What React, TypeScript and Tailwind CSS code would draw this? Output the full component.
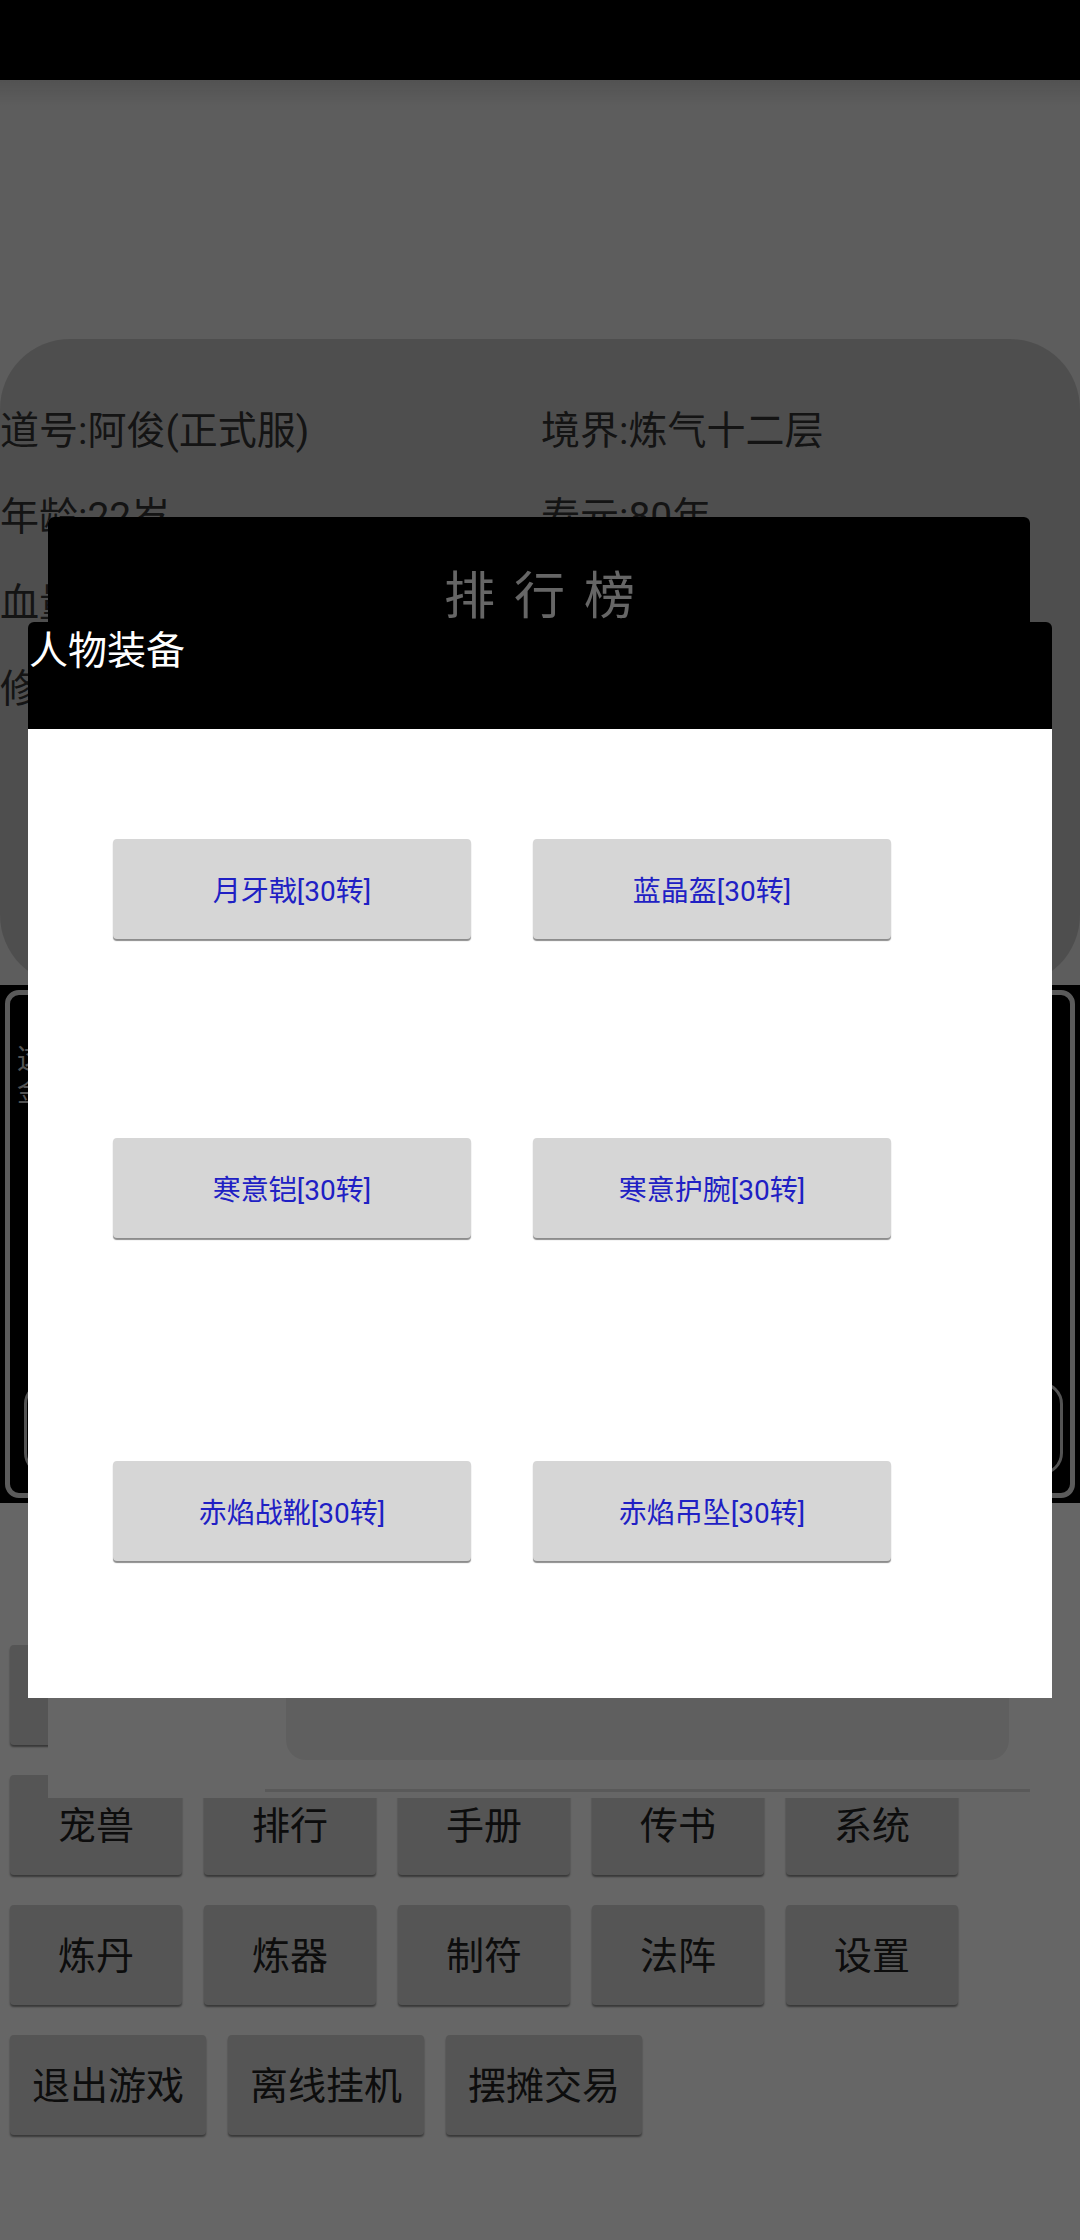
import React from "react";

const infoRows = [
  ["道号:阿俊(正式服)", "境界:炼气十二层"],
  ["年龄:22岁", "寿元:80年"],
  ["血量:1200/1200", ""],
  ["修为:35210/50000", ""],
];

const menuRows = [
  ["背包", "功法", "任务", "地图", "好友"],
  ["宠兽", "排行", "手册", "传书", "系统"],
  ["炼丹", "炼器", "制符", "法阵", "设置"],
];

const equipRows = [
  { items: ["月牙戟[30转]", "蓝晶盔[30转]"], mt: "mt-[110px]" },
  { items: ["寒意铠[30转]", "寒意护腕[30转]"], mt: "mt-[199px]" },
  { items: ["赤焰战靴[30转]", "赤焰吊坠[30转]"], mt: "mt-[223px]" },
];

function MenuButton({ label, wide }: { label: string; wide?: boolean }) {
  return (
    <button
      className={`${wide ? "w-[196px]" : "w-[172px]"} flex h-[100px] items-center justify-center rounded-[4px] bg-[#d4d4d4] pt-[3px] text-[38px] text-[#222] shadow-[0_2px_2px_rgba(0,0,0,0.45)]`}
    >
      {label}
    </button>
  );
}

function App() {
  return (
    <div className="relative h-[2240px] w-[1080px] overflow-hidden bg-white font-['Roboto','Noto_Sans_CJK_SC',sans-serif]">
      <div className="h-[80px] bg-black" />

      {/* character info */}
      <div className="bg-[#e9e9e9] bg-[linear-gradient(to_bottom,rgba(0,0,0,0.12),transparent_26px)] pt-[259px]">
        <div className="h-[646px] rounded-[70px] bg-[#c4c4c4] pt-[49px] text-[39px] leading-[86px] text-[#333]">
          {infoRows.map((row, i) => (
            <div key={i} className="grid grid-cols-2">
              <span className="whitespace-nowrap">{row[0]}</span>
              <span className="whitespace-nowrap pl-[1px]">{row[1]}</span>
            </div>
          ))}
        </div>
      </div>

      {/* message log */}
      <div className="h-[518px] bg-black p-[5px]">
        <div className="h-full rounded-[14px] border-[5px] border-[#e4e4e4] bg-black px-[7px] pt-[48px]">
          <p className="whitespace-nowrap text-[28px] leading-[33px] text-[#d0d0d0]">这里是修仙世界的消息记录</p>
          <p className="whitespace-nowrap text-[28px] leading-[33px] text-[#d0d0d0]">金币:1000</p>
          <div className="mt-[273px] ml-[7px] h-[93px] rounded-[22px] border-[3px] border-[#cfcfcf]" />
        </div>
      </div>

      {/* menu */}
      <div className="flex flex-col gap-[30px] px-[10px] pt-[142px]">
        {menuRows.map((row, i) => (
          <div key={i} className="flex gap-[22px]">
            {row.map((label) => (
              <MenuButton key={label} label={label} />
            ))}
          </div>
        ))}
        <div className="flex gap-[22px]">
          {["退出游戏", "离线挂机", "摆摊交易"].map((label) => (
            <MenuButton key={label} label={label} wide />
          ))}
        </div>
      </div>

      {/* ranking dialog (behind) */}
      <div className="absolute left-[48px] top-[517px] flex h-[1281px] w-[982px] flex-col rounded-t-[6px] bg-white">
        <div className="flex h-[130px] justify-center rounded-t-[6px] bg-black pt-[50px] pl-[20px]">
          <span className="text-[51px] leading-[60px] tracking-[19px] text-white">排行榜</span>
        </div>
        <div className="flex flex-1 flex-col px-[21px] pb-[29px] pt-[500px]">
          <div className="ml-[217px] flex-1 rounded-[20px] bg-[#eeeeee]" />
        </div>
        <div className="ml-[217px] h-[3px] bg-[#dedede] mb-[6px]" />
      </div>

      {/* dim */}
      <div className="absolute inset-0 bg-black/60" />

      {/* equipment dialog */}
      <div className="absolute left-[28px] top-[622px] flex h-[1076px] w-[1024px] flex-col">
        <div className="h-[107px] rounded-t-[6px] bg-black pl-[1px] pt-[5px]">
          <span className="text-[39px] leading-[48px] text-white">人物装备</span>
        </div>
        <div className="flex-1 bg-white pl-[85px]">
          {equipRows.map((row, i) => (
            <div key={i} className={`flex gap-[62px] ${row.mt}`}>
              {row.items.map((item) => (
                <button
                  key={item}
                  className="flex h-[100px] w-[358px] items-center justify-center rounded-[4px] bg-[#d6d6d6] pt-[5px] text-[28px] text-[#2020c4] shadow-[0_2px_1px_rgba(0,0,0,0.45)]"
                >
                  {item}
                </button>
              ))}
            </div>
          ))}
        </div>
      </div>
    </div>
  );
}

export default App;
